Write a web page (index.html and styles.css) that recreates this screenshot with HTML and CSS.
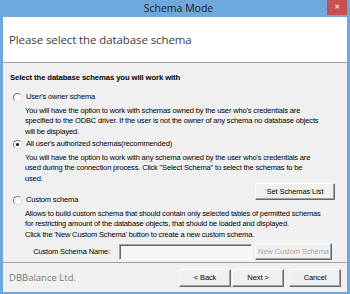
FILE: index.html
```html
<!DOCTYPE html>
<html lang="en">
<head>
  <meta charset="UTF-8" />
  <title>Schema Mode</title>
  <link rel="stylesheet" href="styles.css">
</head>
<body>
  <div class="window">
    <div class="titlebar">
      <span></span>
      <span class="title">Schema Mode</span>
      <span class="close">&#x2715;</span>
    </div>

    <div class="client">
      <div class="header">Please select the database schema</div>

      <div class="content">
        <p class="heading">Select the database schemas you will work with</p>

        <label class="option">
          <span class="radio"></span>
          User's owner schema
        </label>
        <p class="desc">
          You will have the option to work with schemas owned by the user who's credentials are<br>
          specified to the ODBC driver. If the user is not the owner of any schema no database objects<br>
          will be displayed.
        </p>

        <label class="option opt-auth">
          <span class="radio checked"></span>
          All user's authorized schemas(recommended)
        </label>
        <p class="desc">
          You will have the option to work with any schema owned by the user who's credentials are<br>
          used during the connection process. Click "Select Schema" to select the schemas to be<br>
          used.
        </p>

        <div class="set-row">
          <button class="btn btn-set">Set Schemas List</button>
        </div>

        <label class="option opt-custom">
          <span class="radio"></span>
          Custom schema
        </label>
        <p class="desc">
          Allows to build custom schema that should contain only selected tables of permitted schemas<br>
          for restricting amount of the database objects, that should be loaded and displayed.<br>
          Click the 'New Custom Schema' button to create a new custom schema.
        </p>

        <div class="name-row">
          <span class="name-label">Custom Schema Name:</span>
          <span class="name-input"></span>
          <button class="btn btn-new" disabled>New Custom Schema</button>
        </div>
      </div>

      <div class="footer">
        <span class="brand">DBBalance Ltd.</span>
        <div class="nav">
          <button class="btn btn-nav">&lt; Back</button>
          <button class="btn btn-nav">Next &gt;</button>
          <button class="btn btn-nav btn-cancel">Cancel</button>
        </div>
      </div>
    </div>
  </div>
</body>
</html>
```

FILE: styles.css
```css
* {
  margin: 0;
  padding: 0;
  box-sizing: border-box;
}

body {
  width: 350px;
  height: 294px;
  overflow: hidden;
  font-family: 'Liberation Sans', Arial, sans-serif;
  font-size: 7.5px;
  letter-spacing: -0.15px;
  color: #000;
}

.window {
  width: 350px;
  height: 294px;
  background: #6fa8dc;
  display: flex;
  flex-direction: column;
}

.titlebar {
  height: 17px;
  display: grid;
  grid-template-columns: 30px 1fr 23px;
  align-items: start;
}

.title {
  font-family: 'Open Sans', 'Noto Sans', sans-serif;
  font-size: 10.5px;
  letter-spacing: 0;
  line-height: 17px;
  text-align: center;
  color: #1e1e1e;
}

.close {
  width: 20px;
  height: 15px;
  background: #c75050;
  color: #fff;
  font-family: 'DejaVu Sans', sans-serif;
  font-size: 7px;
  font-weight: bold;
  line-height: 15px;
  text-align: center;
}

.client {
  flex: 1;
  margin: 0 3px 2px;
  background: #f0f0f0;
  display: flex;
  flex-direction: column;
  overflow: hidden;
}

.header {
  height: 46px;
  flex-shrink: 0;
  background: #fff;
  border-bottom: 1px solid #a0a0a0;
  padding-left: 6px;
  display: flex;
  align-items: center;
  font-family: 'Open Sans', 'Noto Sans', sans-serif;
  font-size: 11.5px;
  letter-spacing: -0.1px;
  color: #3c3c3c;
}

.content {
  flex: 1;
  padding: 8px 12px 0 7px;
  white-space: nowrap;
}

.heading {
  font-size: 7.7px;
  font-weight: bold;
  letter-spacing: -0.1px;
  line-height: 13px;
}

.option {
  display: flex;
  align-items: center;
  gap: 4px;
  margin: 7px 0 0 3px;
  line-height: 12px;
}

.opt-auth {
  margin-top: 1px;
}

.opt-custom {
  margin-top: -6px;
}

.radio {
  width: 9px;
  height: 9px;
  border-radius: 50%;
  border: 1px solid;
  border-color: #7a7a7a #dcdcdc #dcdcdc #7a7a7a;
  background: #fff;
  display: flex;
  align-items: center;
  justify-content: center;
}

.radio.checked::after {
  content: "";
  width: 3px;
  height: 3px;
  border-radius: 50%;
  background: #000;
}

.desc {
  margin: 2.5px 0 0 15px;
  line-height: 10.5px;
}

.set-row {
  display: flex;
  justify-content: flex-end;
  margin-top: -1px;
}

.btn {
  font-family: inherit;
  font-size: 7.5px;
  letter-spacing: -0.1px;
  height: 17px;
  background: #f0f0f0;
  border: 1px solid;
  border-color: #fff #696969 #696969 #fff;
  box-shadow: inset -1px -1px #a0a0a0;
  color: #000;
}

.btn-set {
  width: 80px;
}

.name-row {
  display: flex;
  align-items: center;
  justify-content: flex-end;
  margin: 3px 3px 0 0;
  height: 17px;
}

.name-label {
  margin-right: 9px;
}

.name-input {
  width: 133px;
  height: 16px;
  margin-right: 3px;
  background: #f6f6f6;
  border: 1px solid;
  border-color: #a0a0a0 #fff #fff #a0a0a0;
  box-shadow: inset 1px 1px #696969;
}

.btn-new {
  width: 77px;
  color: #a0a0a0;
  text-shadow: 1px 1px #fff;
}

.footer {
  height: 30px;
  flex-shrink: 0;
  border-top: 1px solid #a0a0a0;
  padding: 0 6px;
  display: flex;
  align-items: center;
  justify-content: space-between;
}

.brand {
  font-family: 'Open Sans', 'Noto Sans', sans-serif;
  font-size: 9.5px;
  letter-spacing: 0;
  color: #7a7a7a;
}

.nav {
  display: flex;
  gap: 1px;
}

.btn-nav {
  width: 52px;
  height: 18px;
}

.btn-cancel {
  margin-left: 4px;
}
```
